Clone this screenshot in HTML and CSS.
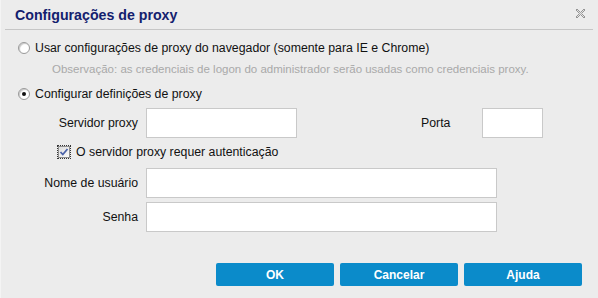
FILE: index.html
```html
<!DOCTYPE html>
<html lang="pt">
<head>
    <meta charset="UTF-8">
    <title>Configurações de proxy</title>
    <link rel="stylesheet" href="styles.css">
</head>
<body>
    <div class="dialog">
        <div class="header">
            <h1>Configurações de proxy</h1>
            <span class="close">
                <svg width="11" height="11" viewBox="0 0 11 11">
                    <path d="M1 2 L2 1 L5.5 4.5 L9 1 L10 2 L6.5 5.5 L10 9 L9 10 L5.5 6.5 L2 10 L1 9 L4.5 5.5 Z" fill="#e4e4e4" stroke="#8a8a8a" stroke-width="0.9"/>
                </svg>
            </span>
        </div>

        <div class="content">
            <label class="option first">
                <span class="radio"></span>
                Usar configurações de proxy do navegador (somente para IE e Chrome)
            </label>
            <div class="note">Observação: as credenciais de logon do administrador serão usadas como credenciais proxy.</div>

            <label class="option second">
                <span class="radio checked"></span>
                Configurar definições de proxy
            </label>

            <div class="field proxy-row">
                <span class="field-label">Servidor proxy</span>
                <input class="text-input server" type="text">
                <span class="port-label">Porta</span>
                <input class="text-input port" type="text">
            </div>

            <label class="auth">
                <span class="focus"><span class="checkbox">
                    <svg width="10" height="10" viewBox="0 0 10 10">
                        <path d="M1.5 5 L3.8 7.5 L8.5 2" fill="none" stroke="#4b63a8" stroke-width="1.8"/>
                    </svg>
                </span></span>
                O servidor proxy requer autenticação
            </label>

            <div class="field user-row">
                <span class="field-label">Nome de usuário</span>
                <input class="text-input wide" type="text">
            </div>
            <div class="field pass-row">
                <span class="field-label">Senha</span>
                <input class="text-input wide" type="password">
            </div>
        </div>

        <div class="actions">
            <button class="btn">OK</button>
            <button class="btn">Cancelar</button>
            <button class="btn">Ajuda</button>
        </div>
    </div>
</body>
</html>
```

FILE: styles.css
```css
body {
    margin: 0;
    font-family: 'Liberation Sans', Arial, sans-serif;
    font-size: 12.3px;
    color: #111;
}
.dialog {
    width: 598px;
    height: 298px;
    background-color: #ececec;
    box-sizing: border-box;
    border-left: 1px solid #f4f4f4;
    display: flex;
    flex-direction: column;
}
.header {
    height: 29px;
    margin: 0 5px 0 4px;
    padding: 0 7px 0 10px;
    border-bottom: 1px solid #c6c6c6;
    display: flex;
    align-items: center;
    justify-content: space-between;
}
.header h1 {
    margin: 0;
    font-size: 14.2px;
    font-weight: bold;
    color: #13206e;
}
.close {
    display: flex;
    margin-top: -2px;
}
.content {
    padding: 0 0 0 17px;
}
.option {
    display: flex;
    align-items: center;
    height: 16px;
    line-height: 16px;
}
.option.first {
    margin-top: 10px;
}
.option.second {
    margin-top: 9px;
}
.radio {
    width: 10px;
    height: 10px;
    border-radius: 50%;
    border: 1px solid #9a9a9a;
    background: radial-gradient(circle at 60% 60%, #ffffff 55%, #e6e6e6 100%);
    box-shadow: inset 1px 1px 1px #c8c8c8;
    margin-right: 5px;
    position: relative;
}
.radio.checked::after {
    content: '';
    position: absolute;
    left: 3px;
    top: 3px;
    width: 4px;
    height: 4px;
    border-radius: 50%;
    background-color: #111;
}
.note {
    margin: 5px 0 0 34px;
    height: 16px;
    line-height: 16px;
    font-size: 11.5px;
    color: #a9a9a9;
}
.field {
    display: flex;
    align-items: center;
}
.field-label {
    width: 120px;
    text-align: right;
    margin-right: 8px;
}
.text-input {
    box-sizing: border-box;
    height: 30px;
    border: 1px solid #c9c9c9;
    background-color: #fff;
    margin: 0;
    padding: 0 4px;
    outline: none;
}
.server {
    width: 151px;
}
.port-label {
    margin-left: 124px;
    width: 61px;
}
.port {
    width: 61px;
}
.wide {
    width: 351px;
}
.proxy-row {
    margin-top: 6px;
}
.auth {
    display: flex;
    align-items: center;
    height: 16px;
    margin: 6px 0 0 39px;
}
.focus {
    border: 1px dotted #333;
    padding: 0;
    margin-right: 5px;
    display: flex;
}
.checkbox {
    width: 10px;
    height: 10px;
    border: 1px solid #8f8f8f;
    background: linear-gradient(135deg, #dcdcdc, #fbfbfb);
    display: flex;
}
.user-row {
    margin-top: 8px;
}
.pass-row {
    margin-top: 4px;
}
.actions {
    display: flex;
    justify-content: flex-end;
    gap: 6px;
    margin-top: 31px;
    padding-right: 16px;
}
.btn {
    width: 118px;
    height: 23px;
    border: none;
    border-radius: 2px;
    background-color: #0b8bca;
    color: #fff;
    font-family: 'Liberation Sans', Arial, sans-serif;
    font-size: 12px;
    font-weight: bold;
    cursor: pointer;
}
```
